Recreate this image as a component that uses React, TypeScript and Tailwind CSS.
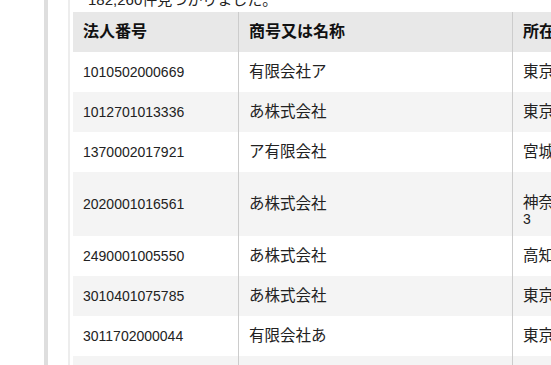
const ROWS = [
  { id: '1010502000669', name: '有限会社ア', addr: ['東京都千代田区丸の内一丁目'] },
  { id: '1012701013336', name: 'あ株式会社', addr: ['東京都中央区日本橋二丁目'] },
  { id: '1370002017921', name: 'ア有限会社', addr: ['宮城県仙台市青葉区一番町'] },
  { id: '2020001016561', name: 'あ株式会社', addr: ['神奈川県横浜市西区みなとみらい二丁目２－', '3'] },
  { id: '2490001005550', name: 'あ株式会社', addr: ['高知県高知市本町五丁目'] },
  { id: '3010401075785', name: 'あ株式会社', addr: ['東京都港区芝公園四丁目'] },
  { id: '3011702000044', name: '有限会社あ', addr: ['東京都北区王子一丁目'] },
  { id: '3012401012345', name: 'あ合同会社', addr: ['東京都新宿区西新宿二丁目'] },
]

const font = 'font-["Liberation_Sans","Noto_Sans_CJK_JP",sans-serif]'

export default function App() {
  return (
    <div className={`w-[551px] h-[365px] overflow-hidden bg-white flex ${font}`}>
      <div className="w-[44px] shrink-0" />
      <div className="w-[4px] shrink-0 bg-[#dedede]" />
      <div className="w-[20px] shrink-0" />
      <div className="w-[2px] shrink-0 bg-[#ededed]" />
      <div className="pl-[3px] shrink-0 w-[700px]">
        <p className="-mt-[10px] mb-[2px] h-[20px] pl-[15px] text-[15px] leading-[20px] text-[#222]">
          182,260件見つかりました。
        </p>

        <div className="flex h-[40px] bg-[#e8e8e8] text-[16px] font-bold text-[#111]">
          <div className="w-[165px] shrink-0 pl-[10px] flex items-center">法人番号</div>
          <div className="w-[274px] shrink-0 pl-[10px] flex items-center border-l border-[#cccccc]">商号又は名称</div>
          <div className="flex-1 pl-[10px] flex items-center border-l border-[#cccccc]">所在地</div>
        </div>

        {ROWS.map((row, i) => {
          const tall = row.addr.length > 1
          return (
            <div
              key={row.id}
              className={`flex text-[#222] ${tall ? 'h-[64px]' : 'h-[40px]'} ${i % 2 === 1 ? 'bg-[#f4f4f4]' : 'bg-white'}`}
            >
              <div className="w-[165px] shrink-0 pl-[10px] flex items-center text-[14px]">{row.id}</div>
              <div className="w-[274px] shrink-0 pl-[10px] flex items-center border-l border-[#cccccc] text-[15.5px]">
                {row.name}
              </div>
              <div
                className={`flex-1 min-w-0 pl-[10px] border-l border-[#cccccc] text-[15.5px] whitespace-nowrap ${
                  tall ? 'pt-[23px] leading-[16px]' : 'flex items-center'
                }`}
              >
                {tall ? (
                  <>
                    <div>{row.addr[0]}</div>
                    <div className="text-[14px]">{row.addr[1]}</div>
                  </>
                ) : (
                  row.addr[0]
                )}
              </div>
            </div>
          )
        })}
      </div>
    </div>
  )
}
